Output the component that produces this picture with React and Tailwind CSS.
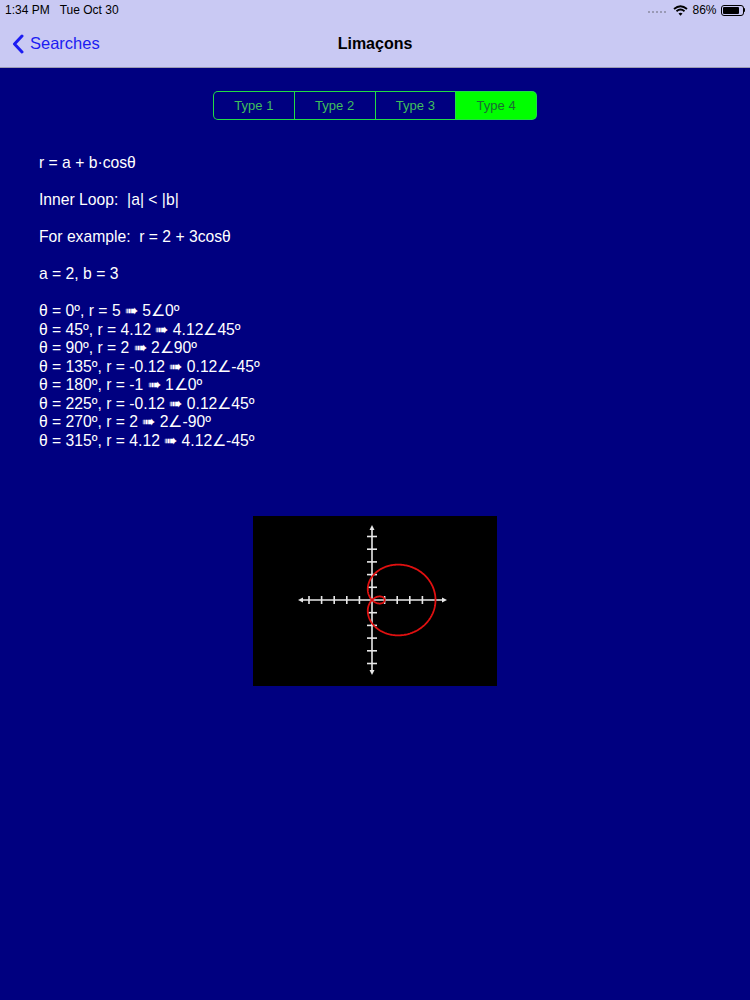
import React from "react";

const font = { fontFamily: '"Liberation Sans", Arial, sans-serif' };

const rows = [
  "θ = 0º, r = 5 ➠ 5∠0º",
  "θ = 45º, r = 4.12 ➠ 4.12∠45º",
  "θ = 90º, r = 2 ➠ 2∠90º",
  "θ = 135º, r = -0.12 ➠ 0.12∠-45º",
  "θ = 180º, r = -1 ➠ 1∠0º",
  "θ = 225º, r = -0.12 ➠ 0.12∠45º",
  "θ = 270º, r = 2 ➠ 2∠-90º",
  "θ = 315º, r = 4.12 ➠ 4.12∠-45º",
];

const StatusBar = () => (
  <div className="h-5 flex items-center justify-between px-[5px] text-[12px] text-black">
    <div className="flex gap-[10px] font-medium">
      <span>1:34 PM</span>
      <span>Tue Oct 30</span>
    </div>
    <div className="flex items-center gap-[4px] font-medium">
      <div className="flex gap-[2px] mr-[3px] mt-[3px]">
        <span className="w-[2px] h-[2px] rounded-full bg-[#8a8aa0]" />
        <span className="w-[2px] h-[2px] rounded-full bg-[#8a8aa0]" />
        <span className="w-[2px] h-[2px] rounded-full bg-[#8a8aa0]" />
        <span className="w-[2px] h-[2px] rounded-full bg-[#8a8aa0]" />
        <span className="w-[2px] h-[2px] rounded-full bg-[#8a8aa0]" />
      </div>
      <svg width="15" height="11" viewBox="0 0 15 11">
        <path d="M1 4 Q7.5 -1.5 14 4" stroke="black" strokeWidth="1.8" fill="none" />
        <path d="M3.5 6.3 Q7.5 2.8 11.5 6.3" stroke="black" strokeWidth="1.8" fill="none" />
        <path d="M5.5 8.6 L7.5 10.8 L9.5 8.6 Q7.5 6.8 5.5 8.6 Z" fill="black" />
      </svg>
      <span>86%</span>
      <div className="flex items-center">
        <div className="w-[23px] h-[11px] rounded-[3px] border border-black p-[1px]">
          <div className="h-full w-[86%] bg-black rounded-[1px]" />
        </div>
        <div className="w-[1.5px] h-[4px] bg-black rounded-r" />
      </div>
    </div>
  </div>
);

const NavBar = () => (
  <div className="h-12 relative flex items-center border-b border-[#9c9cb4]">
    <div className="flex items-center pl-[12px] gap-[6px] text-[#1c1cf2] text-[16.5px]">
      <svg width="12" height="20" viewBox="0 0 12 20">
        <path d="M10 2 L2.5 10 L10 18" stroke="#1c1cf2" strokeWidth="3" fill="none" strokeLinecap="round" strokeLinejoin="round" />
      </svg>
      <span>Searches</span>
    </div>
    <div className="absolute inset-0 flex items-center justify-center pointer-events-none text-[16px] font-semibold text-black">
      Limaçons
    </div>
  </div>
);

const Segments = () => {
  const items = ["Type 1", "Type 2", "Type 3", "Type 4"];
  return (
    <div className="flex justify-center pt-[23px]">
      <div className="flex w-[324px] h-[29px] bg-[#22dd44] p-[1px] gap-[1px] rounded-[5px] text-[13px]">
        {items.map((t, i) => (
          <div
            key={t}
            className={
              "flex-1 flex items-center justify-center " +
              (i < 3 ? "bg-[#000080] text-[#3fbf5c] " : "bg-[#00ff00] text-[#1b6a34] ") +
              (i === 0 ? "rounded-l-[4px]" : i === 3 ? "rounded-r-[4px]" : "")
            }
          >
            {t}
          </div>
        ))}
      </div>
    </div>
  );
};

const Chart = () => {
  const ux = 12.6;
  const uy = 12.7;
  const cx = 12.7;
  const cy = 11.6;
  const ox = 119;
  const oy = 84;
  const pts = [];
  for (let i = 0; i <= 360; i++) {
    const t = (i * Math.PI) / 180;
    const r = 2 + 3 * Math.cos(t);
    pts.push(`${(ox + r * Math.cos(t) * cx).toFixed(2)},${(oy - r * Math.sin(t) * cy).toFixed(2)}`);
  }
  const xt = [-5, -4, -3, -2, -1, 1, 2, 3, 4];
  const yt = [-5, -4, -3, -2, -1, 1, 2, 3, 4, 5];
  return (
    <svg width="244" height="170" viewBox="0 0 244 170" className="bg-black">
      <g stroke="#e8e8e8" strokeWidth="1.6" fill="none">
        <line x1={ox - 71} y1={oy} x2={ox + 72} y2={oy} />
        <line x1={ox} y1={oy - 72} x2={ox} y2={oy + 72} />
        {xt.map((k) => (
          <line key={"x" + k} x1={ox + k * ux} y1={oy - 4} x2={ox + k * ux} y2={oy + 4} />
        ))}
        {yt.map((k) => (
          <line key={"y" + k} x1={ox - 5} y1={oy + k * uy} x2={ox + 5} y2={oy + k * uy} />
        ))}
      </g>
      <g fill="#e8e8e8">
        <path d={`M${ox - 74} ${oy} l5 -2.5 l0 5 z`} />
        <path d={`M${ox + 75} ${oy} l-5 -2.5 l0 5 z`} />
        <path d={`M${ox} ${oy - 75} l-2.5 5 l5 0 z`} />
        <path d={`M${ox} ${oy + 75} l-2.5 -5 l5 0 z`} />
      </g>
      <polyline points={pts.join(" ")} stroke="#e01010" strokeWidth="1.8" fill="none" />
    </svg>
  );
};

export default function App() {
  return (
    <div className="w-[750px] h-[1000px] bg-[#000080] flex flex-col" style={font}>
      <div className="bg-[#c9c9f3]">
        <StatusBar />
        <NavBar />
      </div>
      <Segments />
      <div className="pl-[39px] pt-[34px] text-white text-[15.7px] leading-[18.5px]">
        <p>r = a + b·cosθ</p>
        <p className="mt-[18.5px]">Inner Loop:&nbsp; |a| &lt; |b|</p>
        <p className="mt-[18.5px]">For example:&nbsp; r = 2 + 3cosθ</p>
        <p className="mt-[18.5px]">a = 2, b = 3</p>
        <div className="mt-[18.5px]">
          {rows.map((r) => (
            <p key={r}>{r}</p>
          ))}
        </div>
      </div>
      <div className="flex justify-center pt-[66px]">
        <Chart />
      </div>
    </div>
  );
}
